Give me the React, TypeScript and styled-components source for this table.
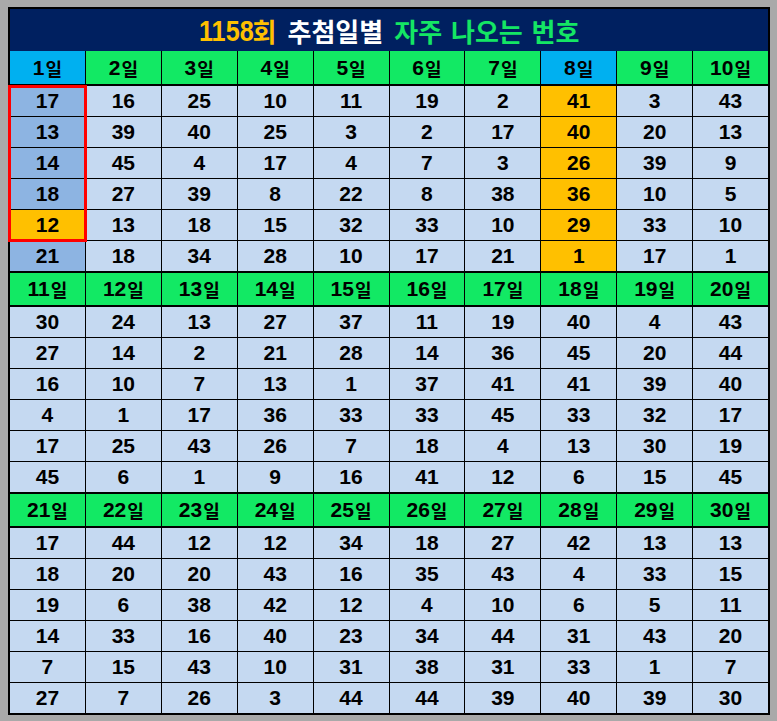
import React from "react";
import styled, { createGlobalStyle } from "styled-components";

const Global = createGlobalStyle`
  html, body { margin: 0; padding: 0; }
  body {
    background: #a9a9a9;
    padding: 7px 7px 0 8px;
    font-family: "Liberation Sans", "Noto Sans CJK KR", sans-serif;
  }
`;

const Table = styled.div`
  width: 762px;
  box-sizing: border-box;
  border: 2px solid #000;
  background: #000;
  display: flex;
  flex-direction: column;
`;

const Title = styled.div`
  height: 42px;
  background: #002060;
  display: flex;
  align-items: center;
  justify-content: center;
  gap: 11px;
  font-family: "Noto Sans CJK KR", sans-serif;
  font-weight: 700;
  font-size: 26px;
  line-height: 1;
  padding-top: 2px;
  box-sizing: border-box;
`;

const TitlePart = styled.span<{ $color: string }>`
  color: ${(p) => p.$color};
  white-space: pre;
  word-spacing: 3px;
  display: inline-flex;
  align-items: center;
`;

const TitleNum = styled.span`
  display: inline-block;
  font-family: "Liberation Sans", sans-serif;
  font-size: 30px;
  font-weight: 700;
  transform: scaleX(0.84);
  transform-origin: left center;
  margin-right: -11px;
`;

const HeaderRow = styled.div<{ $first?: boolean }>`
  display: grid;
  grid-template-columns: repeat(10, 1fr);
  gap: 1px;
  height: ${(p) => (p.$first ? 33 : 32)}px;
  border-top: ${(p) => (p.$first ? 0 : 2)}px solid #000;
  border-bottom: 2px solid #000;
`;

const HeadCell = styled.div<{ $blue?: boolean }>`
  background: ${(p) => (p.$blue ? "#00b0f0" : "#12e964")};
  display: flex;
  align-items: center;
  justify-content: center;
  font-weight: 700;
  font-size: 21px;
  color: #000;
`;

const Il = styled.span`
  font-family: "Noto Sans CJK KR", sans-serif;
  font-size: 18px;
  font-weight: 700;
  margin-left: 1px;
`;

const Body = styled.div`
  position: relative;
  display: grid;
  grid-template-columns: repeat(10, 1fr);
  grid-auto-rows: 30px;
  gap: 1px;
`;

type Tone = "plain" | "dark" | "orange";

const Cell = styled.div<{ $tone: Tone }>`
  background: ${(p) =>
    p.$tone === "orange" ? "#ffc000" : p.$tone === "dark" ? "#8db4e2" : "#c5d9f1"};
  display: flex;
  align-items: center;
  justify-content: center;
  font-weight: 700;
  font-size: 21px;
  color: #000;
`;

const RedBox = styled.div`
  position: absolute;
  left: -2px;
  top: -1px;
  width: 79px;
  height: 157px;
  box-sizing: border-box;
  border: 3px solid #ff0000;
  pointer-events: none;
`;

const sections: number[][][] = [
  [
    [17, 16, 25, 10, 11, 19, 2, 41, 3, 43],
    [13, 39, 40, 25, 3, 2, 17, 40, 20, 13],
    [14, 45, 4, 17, 4, 7, 3, 26, 39, 9],
    [18, 27, 39, 8, 22, 8, 38, 36, 10, 5],
    [12, 13, 18, 15, 32, 33, 10, 29, 33, 10],
    [21, 18, 34, 28, 10, 17, 21, 1, 17, 1],
  ],
  [
    [30, 24, 13, 27, 37, 11, 19, 40, 4, 43],
    [27, 14, 2, 21, 28, 14, 36, 45, 20, 44],
    [16, 10, 7, 13, 1, 37, 41, 41, 39, 40],
    [4, 1, 17, 36, 33, 33, 45, 33, 32, 17],
    [17, 25, 43, 26, 7, 18, 4, 13, 30, 19],
    [45, 6, 1, 9, 16, 41, 12, 6, 15, 45],
  ],
  [
    [17, 44, 12, 12, 34, 18, 27, 42, 13, 13],
    [18, 20, 20, 43, 16, 35, 43, 4, 33, 15],
    [19, 6, 38, 42, 12, 4, 10, 6, 5, 11],
    [14, 33, 16, 40, 23, 34, 44, 31, 43, 20],
    [7, 15, 43, 10, 31, 38, 31, 33, 1, 7],
    [27, 7, 26, 3, 44, 44, 39, 40, 39, 30],
  ],
];

function toneOf(s: number, r: number, c: number): Tone {
  if (s !== 0) return "plain";
  if (c === 7) return "orange";
  if (c === 0) return r === 4 ? "orange" : "dark";
  return "plain";
}

export default function App() {
  return (
    <>
      <Global />
      <Table>
        <Title>
          <TitlePart $color="#ffc000">
            <TitleNum>1158</TitleNum>회
          </TitlePart>
          <TitlePart $color="#ffffff">추첨일별</TitlePart>
          <TitlePart $color="#14e664">자주 나오는 번호</TitlePart>
        </Title>
        {sections.map((rows, s) => (
          <React.Fragment key={s}>
            <HeaderRow $first={s === 0}>
              {Array.from({ length: 10 }, (_, c) => (
                <HeadCell key={c} $blue={s === 0 && (c === 0 || c === 7)}>
                  {s * 10 + c + 1}
                  <Il>일</Il>
                </HeadCell>
              ))}
            </HeaderRow>
            <Body>
              {rows.map((row, r) =>
                row.map((v, c) => (
                  <Cell key={`${r}-${c}`} $tone={toneOf(s, r, c)}>
                    {v}
                  </Cell>
                ))
              )}
              {s === 0 && <RedBox />}
            </Body>
          </React.Fragment>
        ))}
      </Table>
    </>
  );
}
